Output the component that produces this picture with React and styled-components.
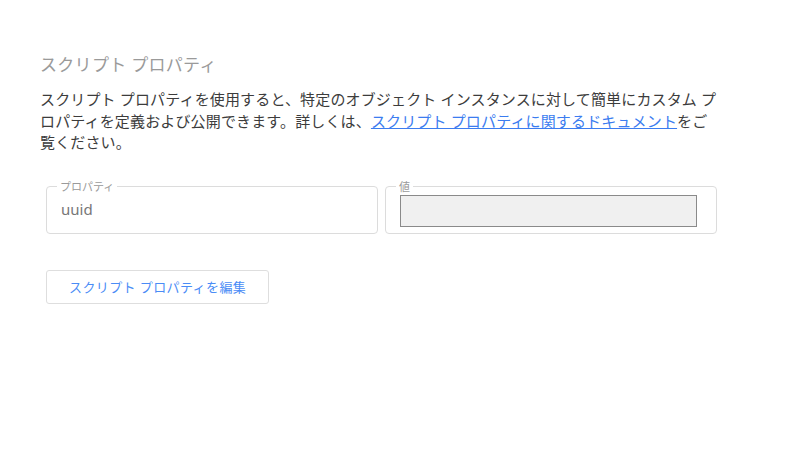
import React from 'react';
import styled, { createGlobalStyle } from 'styled-components';

const GlobalStyle = createGlobalStyle`
  html, body {
    margin: 0;
    padding: 0;
    background: #fff;
  }
  body {
    font-family: "Noto Sans", "Noto Sans CJK JP", sans-serif;
    -webkit-font-smoothing: antialiased;
  }
`;

const Page = styled.div`
  width: 800px;
  height: 450px;
  box-sizing: border-box;
  padding: 53px 0 0 40px;
  background: #fff;
`;

const Title = styled.h2`
  margin: 0 0 12px;
  font-size: 17px;
  line-height: 24px;
  font-weight: 400;
  letter-spacing: 0.3px;
  color: #9a9a9a;
`;

const Description = styled.p`
  margin: 0;
  width: 682px;
  font-size: 15px;
  line-height: 21.5px;
  letter-spacing: 0.15px;
  color: #3c3c3c;

  a {
    color: #3b7cf0;
    text-decoration: underline;
  }
`;

const FieldRow = styled.div`
  display: grid;
  grid-template-columns: 332px 332px;
  column-gap: 7px;
  margin: 27px 0 0 6px;
`;

const Field = styled.fieldset`
  margin: 0;
  padding: 0 14px 6px;
  border: 1px solid #dcdcdc;
  border-radius: 4px;
  min-width: 0;
`;

const Legend = styled.legend`
  margin-left: -4px;
  padding: 0 3px;
  font-size: 11px;
  line-height: 12px;
  color: #9a9a9a;
`;

const Value = styled.div`
  height: 32px;
  line-height: 32px;
  font-size: 15px;
  color: #777;
`;

const GreyInput = styled.input`
  display: block;
  box-sizing: border-box;
  width: calc(100% - 5px);
  height: 32px;
  margin: 2px 0 0;
  padding: 0 6px;
  border: 1px solid #8a8a8a;
  background: #f0f0f0;
  font: inherit;
`;

const EditButton = styled.button`
  margin: 36px 0 0 6px;
  height: 34px;
  padding: 0 22px;
  border: 1px solid #dedede;
  border-radius: 3px;
  background: #fff;
  font-family: "Noto Sans", "Noto Sans CJK JP", sans-serif;
  font-size: 13px;
  letter-spacing: 0.4px;
  color: #4a8cf6;
  cursor: pointer;
`;

export default function App() {
  return (
    <Page>
      <GlobalStyle />
      <Title>スクリプト プロパティ</Title>
      <Description>
        スクリプト プロパティを使用すると、特定のオブジェクト インスタンスに対して簡単にカスタム プロパティを定義および公開できます。詳しくは、
        <a href="#docs">スクリプト プロパティに関するドキュメント</a>
        をご覧ください。
      </Description>
      <FieldRow>
        <Field>
          <Legend>プロパティ</Legend>
          <Value>uuid</Value>
        </Field>
        <Field>
          <Legend>値</Legend>
          <GreyInput type="text" readOnly />
        </Field>
      </FieldRow>
      <EditButton type="button">スクリプト プロパティを編集</EditButton>
    </Page>
  );
}
